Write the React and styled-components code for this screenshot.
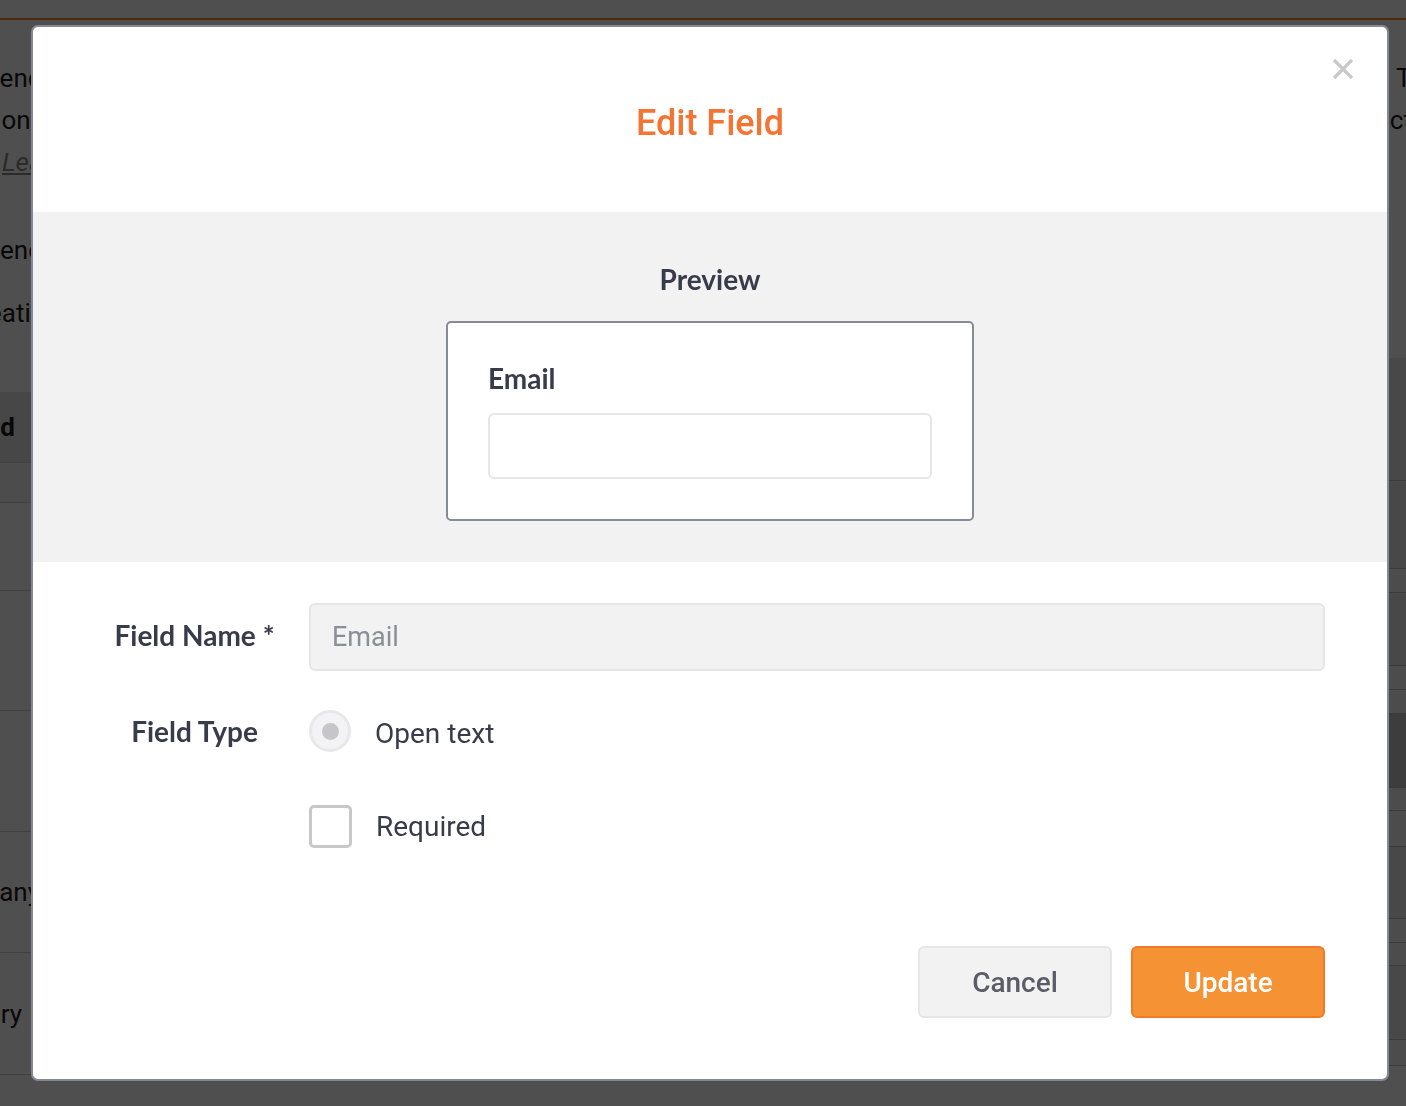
import styled, { createGlobalStyle } from "styled-components";

const GlobalStyle = createGlobalStyle`
  html, body {
    margin: 0;
    padding: 0;
    background: #ffffff;
    overflow: hidden;
  }
  body {
    font-family: Roboto, "Liberation Sans", sans-serif;
  }
  * {
    box-sizing: border-box;
  }
`;

/* ---- page behind the dialog ---- */

const Page = styled.div`
  height: 1106px;
  background: #ffffff;
  display: flex;
  flex-direction: column;
`;

const TopBar = styled.div`
  height: 20px;
  background: #ffffff;
  border-bottom: 2px solid #f58a32;
`;

const PageBody = styled.div`
  flex: 1;
  display: flex;
  justify-content: space-between;
`;

const LeftPane = styled.div`
  width: 70px;
  overflow: hidden;
  display: flex;
  flex-direction: column;
  padding-top: 37px;
`;

const RightPane = styled.div`
  width: 34px;
  overflow: hidden;
  display: flex;
  flex-direction: column;
  padding-top: 37px;
`;

const BgLine = styled.div`
  height: 42px;
  display: flex;
  align-items: center;
  justify-content: ${(p) => (p.start ? "flex-start" : "flex-end")};
  padding-left: ${(p) => p.pl || 0}px;
  padding-right: ${(p) => p.pr || 0}px;
  white-space: nowrap;
  font-size: 26px;
  color: ${(p) => (p.muted ? "#8a8a8a" : "#1c1c1c")};
  font-style: ${(p) => (p.muted ? "italic" : "normal")};
  text-decoration: ${(p) => (p.muted ? "underline" : "none")};
`;

const BgRow = styled.div`
  height: ${(p) => p.h}px;
  display: flex;
  align-items: center;
  justify-content: flex-end;
  padding-right: ${(p) => p.pr || 0}px;
  white-space: nowrap;
  font-size: 26px;
  font-weight: ${(p) => (p.bold ? 700 : 400)};
  color: #1c1c1c;
  background: ${(p) => p.bg || "#ffffff"};
  border-bottom: 1px solid ${(p) => p.line || "#d0d0d0"};
`;

const Spacer = styled.div`
  height: ${(p) => p.h}px;
  flex-shrink: 0;
`;

/* ---- dialog ---- */

const Overlay = styled.div`
  position: fixed;
  inset: 0;
  background: rgba(0, 0, 0, 0.69);
  padding: 25px 0 0 31px;
`;

const Modal = styled.div`
  position: relative;
  width: 1358px;
  height: 1056px;
  background: #ffffff;
  border: 2px solid #858993;
  border-radius: 7px;
  overflow: hidden;
  display: flex;
  flex-direction: column;
`;

const CloseButton = styled.button`
  position: absolute;
  top: 30px;
  right: 32px;
  width: 24px;
  height: 24px;
  padding: 0;
  border: none;
  background: none;
  cursor: pointer;
  display: flex;
`;

const Header = styled.div`
  height: 185px;
  padding-top: 75px;
  text-align: center;
`;

const Title = styled.h2`
  margin: 0;
  font-family: Roboto, "Liberation Sans", sans-serif;
  font-weight: 500;
  font-size: 36px;
  line-height: 43px;
  color: #f37433;
`;

const PreviewSection = styled.div`
  height: 350px;
  background: #f2f2f2;
  padding-top: 51px;
  display: flex;
  flex-direction: column;
  align-items: center;
`;

const Heading = styled.div`
  font-family: Lato, "Open Sans", sans-serif;
  font-weight: 700;
  font-size: 28px;
  line-height: 32px;
  color: #373b4a;
`;

const PreviewCard = styled.div`
  margin-top: 26px;
  width: 528px;
  height: 200px;
  background: #ffffff;
  border: 2px solid #878b95;
  border-radius: 5px;
  padding: 39px 40px 0;
  display: flex;
  flex-direction: column;
  gap: 19px;
`;

const PreviewInput = styled.div`
  height: 66px;
  border: 2px solid #e6e6e8;
  border-radius: 6px;
  background: #ffffff;
`;

const Form = styled.div`
  flex: 1;
  padding: 41px 62px 0 47px;
  display: flex;
  flex-direction: column;
`;

const FormRow = styled.div`
  display: grid;
  grid-template-columns: 229px 1fr;
  align-items: center;
  margin-bottom: ${(p) => p.mb || 0}px;
`;

const Label = styled.div`
  font-family: Lato, "Open Sans", sans-serif;
  font-weight: 700;
  font-size: 28px;
  line-height: 32px;
  color: #373b4a;
  text-align: center;
  padding-bottom: ${(p) => p.pb || 0}px;
`;

const Cell = styled.div`
  display: flex;
  align-items: center;
`;

const TextInput = styled.input`
  width: 100%;
  height: 68px;
  border: 2px solid #e6e6e8;
  border-radius: 6px;
  background: #f2f2f2;
  padding: 0 21px;
  font-family: Roboto, "Liberation Sans", sans-serif;
  font-size: 27px;
  color: #8b8e97;
  outline: none;
`;

const Radio = styled.span`
  width: 42px;
  height: 42px;
  border-radius: 50%;
  background: #f3f3f5;
  border: 3px solid #e8e8ea;
  display: flex;
  align-items: center;
  justify-content: center;

  &::after {
    content: "";
    width: 17px;
    height: 17px;
    border-radius: 50%;
    background: #c5c5ca;
  }
`;

const Checkbox = styled.span`
  width: 43px;
  height: 43px;
  border: 3px solid #c8c8cc;
  border-radius: 5px;
  background: #ffffff;
`;

const OptionText = styled.span`
  margin-left: 24px;
  font-family: Roboto, "Liberation Sans", sans-serif;
  font-size: 28px;
  color: #373b4a;
  padding-top: ${(p) => p.pt || 0}px;
`;

const Footer = styled.div`
  display: flex;
  justify-content: flex-end;
  gap: 19px;
  padding: 98px 62px 61px 0;
`;

const Button = styled.button`
  width: 194px;
  height: 72px;
  border-radius: 6px;
  border: 2px solid ${(p) => (p.primary ? "#ef7a2b" : "#e6e6e8")};
  background: ${(p) => (p.primary ? "#f59233" : "#f2f2f2")};
  color: ${(p) => (p.primary ? "#ffffff" : "#5a5d68")};
  font-family: Roboto, "Liberation Sans", sans-serif;
  font-weight: 500;
  font-size: 28px;
  cursor: pointer;
`;

const CloseIcon = () => (
  <svg width="24" height="24" viewBox="0 0 24 24">
    <path
      d="M3 3 L21 21 M21 3 L3 21"
      stroke="#c9c9c9"
      strokeWidth="3.2"
      fill="none"
    />
  </svg>
);

const leftTable = [
  { h: 71, bg: "#e6e6e6", bold: true, text: "Field", pr: 55 },
  { h: 40, bg: "#f4f4f4" },
  { h: 88 },
  { h: 120 },
  { h: 121 },
  { h: 121, text: "Company", pr: 30 },
  { h: 122, text: "Primary", pr: 48 },
];

const rightTable = [
  { h: 123, bg: "#e8e8e8" },
  { h: 88, bg: "#e8e8e8" },
  { h: 24, bg: "#f6f6f6" },
  { h: 73, bg: "#e8e8e8" },
  { h: 24, bg: "#f6f6f6" },
  { h: 24, bg: "#f6f6f6" },
  { h: 74, bg: "#c4c4c4" },
  { h: 23, bg: "#f6f6f6" },
  { h: 36, bg: "#f6f6f6" },
  { h: 72, bg: "#e8e8e8" },
  { h: 24, bg: "#f6f6f6" },
  { h: 23, bg: "#f6f6f6" },
  { h: 74, bg: "#e8e8e8" },
  { h: 26, bg: "#f6f6f6" },
];

const App = () => {
  return (
    <>
      <GlobalStyle />
      <Page>
        <TopBar />
        <PageBody>
          <LeftPane>
            <BgLine>Attendee</BgLine>
            <BgLine pr={26}>Options</BgLine>
            <BgLine start pl={2} muted>Learn more</BgLine>
            <Spacer h={46} />
            <BgLine pr={13}>Agenda</BgLine>
            <Spacer h={21} />
            <BgLine pr={10}>Creation</BgLine>
            <Spacer h={58} />
            {leftTable.map((r, i) => (
              <BgRow key={i} h={r.h} bg={r.bg} bold={r.bold} pr={r.pr}>
                {r.text}
              </BgRow>
            ))}
          </LeftPane>
          <RightPane>
            <BgLine start pl={24}>Type</BgLine>
            <BgLine start pl={4}>ected</BgLine>
            <Spacer h={217} />
            {rightTable.map((r, i) => (
              <BgRow key={i} h={r.h} bg={r.bg} line="#bdbdbd" />
            ))}
          </RightPane>
        </PageBody>
      </Page>

      <Overlay>
        <Modal>
          <CloseButton aria-label="Close">
            <CloseIcon />
          </CloseButton>
          <Header>
            <Title>Edit Field</Title>
          </Header>

          <PreviewSection>
            <Heading>Preview</Heading>
            <PreviewCard>
              <Heading>Email</Heading>
              <PreviewInput />
            </PreviewCard>
          </PreviewSection>

          <Form>
            <FormRow mb={39}>
              <Label pb={4}>Field Name *</Label>
              <Cell>
                <TextInput readOnly value="Email" />
              </Cell>
            </FormRow>

            <FormRow mb={53}>
              <Label>Field Type</Label>
              <Cell>
                <Radio />
                <OptionText pt={4}>Open text</OptionText>
              </Cell>
            </FormRow>

            <FormRow>
              <span />
              <Cell>
                <Checkbox />
                <OptionText>Required</OptionText>
              </Cell>
            </FormRow>
          </Form>

          <Footer>
            <Button>Cancel</Button>
            <Button primary>Update</Button>
          </Footer>
        </Modal>
      </Overlay>
    </>
  );
};

export default App;
